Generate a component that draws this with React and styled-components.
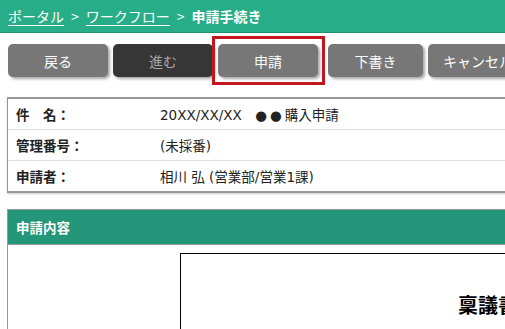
import React from "react";
import styled, { createGlobalStyle } from "styled-components";

const GlobalStyle = createGlobalStyle`
  html, body {
    margin: 0;
    padding: 0;
    background: #fff;
    overflow: hidden;
  }
  body {
    font-family: "Noto Sans CJK JP", "Noto Sans", sans-serif;
    color: #222;
  }
`;

const buttons = [
  { label: "戻る", width: 100 },
  { label: "進む", width: 100, dark: true },
  { label: "申請", width: 100, selected: true },
  { label: "下書き", width: 95 },
  { label: "キャンセル", width: 100 },
];

const App = () => {
  const rows = [
    {
      label: "件\u3000名：",
      value: (
        <>
          20XX/XX/XX{"\u3000"}
          <Bullets>●●</Bullets>購入申請
        </>
      ),
    },
    { label: "管理番号：", value: "(未採番)" },
    { label: "申請者：", value: "相川 弘 (営業部/営業1課)" },
  ];

  return (
    <Page>
      <GlobalStyle />
      <Header>
        <Crumb href="#">ポータル</Crumb>
        <Sep>&gt;</Sep>
        <Crumb href="#">ワークフロー</Crumb>
        <Sep>&gt;</Sep>
        <Current>申請手続き</Current>
      </Header>

      <Content>
        <Toolbar>
          {buttons.map((b) => (
            <ActionButton key={b.label} $w={b.width} $dark={b.dark} $selected={b.selected}>
              {b.label}
            </ActionButton>
          ))}
        </Toolbar>

        <InfoTable>
          {rows.map((r) => (
            <InfoRow key={r.label}>
              <Label>{r.label}</Label>
              <Value>{r.value}</Value>
            </InfoRow>
          ))}
        </InfoTable>

        <Section>
          <SectionHead>申請内容</SectionHead>
          <SectionBody>
            <Sheet>
              <SheetTitle>稟議書</SheetTitle>
            </Sheet>
          </SectionBody>
        </Section>
      </Content>
    </Page>
  );
};

export default App;

const Page = styled.div`
  width: 900px;
`;

const Header = styled.header`
  height: 32px;
  background: #28ad89;
  border-bottom: 1px solid #1f8f70;
  display: flex;
  align-items: center;
  padding: 0 8px;
  color: #fff;
  font-size: 14px;
`;

const Crumb = styled.a`
  color: #fff;
  text-decoration: underline;
  text-underline-offset: 3px;
`;

const Sep = styled.span`
  margin: 0 7px;
`;

const Current = styled.span`
  font-weight: bold;
`;

const Content = styled.main`
  padding: 11px 0 0 8px;
`;

const Toolbar = styled.div`
  display: flex;
  gap: 5px;
  height: 34px;
`;

const ActionButton = styled.button`
  position: relative;
  flex: none;
  width: ${(p) => p.$w}px;
  height: 33px;
  border: none;
  border-radius: 5px;
  background: ${(p) => (p.$dark ? "#363636" : "#777")};
  color: ${(p) => (p.$dark ? "#a8a8a8" : "#fff")};
  font-family: inherit;
  font-size: 14px;
  box-shadow: 2px 2px 3px rgba(0, 0, 0, 0.35);
  margin-right: ${(p) => (p.$selected ? "5px" : "0")};

  &::after {
    content: "";
    display: ${(p) => (p.$selected ? "block" : "none")};
    position: absolute;
    top: -8px;
    bottom: -8px;
    left: -6px;
    right: -7px;
    border: 3px solid #c4161c;
  }
`;

const InfoTable = styled.div`
  margin-top: 19px;
  margin-left: -1px;
  border-top: 2px solid #999;
  border-left: 1px solid #999;
  border-bottom: 2px solid #999;
  box-shadow: 0 1px 2px rgba(0, 0, 0, 0.2);
`;

const InfoRow = styled.div`
  display: grid;
  grid-template-columns: 152px 1fr;
  align-items: center;
  height: 30px;
  & + & {
    border-top: 1px solid #ddd;
  }
`;

const Label = styled.div`
  padding-left: 8px;
  font-size: 13.5px;
  font-weight: bold;
  color: #222;
`;

const Value = styled.div`
  font-family: "DejaVu Sans", "Noto Sans CJK JP", sans-serif;
  font-size: 13.5px;
  color: #222;
`;

const Bullets = styled.span`
  letter-spacing: 3px;
`;

const Section = styled.section`
  margin-top: 16px;
  margin-left: -1px;
  border: 1px solid #999;
`;

const SectionHead = styled.div`
  height: 34px;
  background: #24967a;
  border-bottom: 1px solid #999;
  display: flex;
  align-items: center;
  padding-left: 8px;
  color: #fff;
  font-size: 13.5px;
  font-weight: bold;
`;

const SectionBody = styled.div`
  padding: 8px 0 20px 172px;
  height: 200px;
`;

const Sheet = styled.div`
  width: 616px;
  height: 300px;
  border: 1px solid #000;
  box-sizing: border-box;
  padding-top: 36px;
`;

const SheetTitle = styled.h2`
  margin: 0;
  text-align: center;
  font-size: 20px;
  font-weight: bold;
  color: #000;
`;
